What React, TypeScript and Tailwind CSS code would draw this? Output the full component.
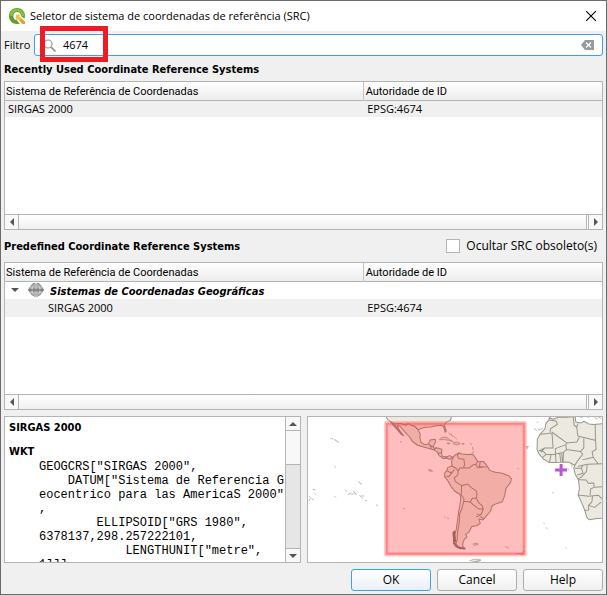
import type { ReactNode } from "react";

const UI = "font-['Open_Sans','Noto_Sans',sans-serif]";
const STRONG = "font-['DejaVu_Sans_Condensed','DejaVu_Sans',sans-serif] text-[11px] font-bold";

function QgisLogo() {
  return (
    <svg viewBox="0 0 48 48" className="size-4 shrink-0" aria-hidden="true">
      <path
        fill="#5f9f30"
        fillRule="evenodd"
        d="M24 0C10 0 0 10 0 24s10 24 24 24c3 0 6-.4 8-1l-8-10C17 37 13 31 13 24s5-12 11-12 12 5 12 12l10 8c1-2 2-5 2-8C48 10 38 0 24 0Z"
      />
      <path fill="#8cbf45" d="M24 2C12 2 2 11 2 23h9c0-8 6-13 13-13s13 6 13 13l9 2C46 12 36 2 24 2Z" />
      <path fill="#ee9a2a" d="M22 20h11l-3 4 18 17v7h-8L27 33l-5 3Z" />
      <path fill="#f3c34a" d="M22 20h11l-3 4 7 7-6 6-4-4-5 3Z" />
    </svg>
  );
}

function Arrow({ dir }: { dir: "left" | "right" | "up" | "down" }) {
  const d = {
    left: "M6 0v8L2 4Z",
    right: "M2 0v8l4-4Z",
    up: "M0 6h8L4 2Z",
    down: "M0 2h8L4 6Z",
  }[dir];
  return (
    <svg viewBox="0 0 8 8" className="size-2" aria-hidden="true">
      <path d={d} fill="#555" />
    </svg>
  );
}

function HorizontalBar() {
  return (
    <div className="flex h-[15px] shrink-0 border-t border-[#b4b4b4]">
      <button aria-label="Rolar para a esquerda" className="flex w-3.5 items-center justify-center border-r border-[#b4b4b4] bg-[#f8f8f8]">
        <Arrow dir="left" />
      </button>
      <div className="flex-1 border-r border-[#b4b4b4] bg-linear-to-b from-white to-[#f0f0f0]" />
      <button aria-label="Rolar para a direita" className="ml-px flex w-3.5 items-center justify-center border-l border-[#b4b4b4] bg-[#f8f8f8]">
        <Arrow dir="right" />
      </button>
    </div>
  );
}

function CrsTable({ children }: { children: ReactNode }) {
  return (
    <div className="flex min-h-0 flex-1 flex-col border border-[#b4b4b4] bg-white">
      <div className="min-h-0 flex-1 overflow-hidden">
        <table className="w-full table-fixed border-collapse text-left text-[11px] leading-4">
          <thead className="font-[Roboto,sans-serif]">
            <tr className="h-[18px] border-b border-[#b4b4b4] bg-linear-to-b from-white to-[#ededed]">
              <th className="w-3/5 border-r border-[#c4c4c4] px-px pt-0.5 font-normal">Sistema de Referência de Coordenadas</th>
              <th className="px-0.5 pt-0.5 font-normal">Autoridade de ID</th>
            </tr>
          </thead>
          <tbody>{children}</tbody>
        </table>
      </div>
      <HorizontalBar />
    </div>
  );
}

function Globe() {
  return (
    <svg viewBox="0 0 16 16" className="size-4 shrink-0" fill="none" aria-hidden="true">
      <path d="M5 1.500h6l3 3.500 1.500 3-3 4.500L8 15l-4.500-2.500L.5 8 2 5Z" fill="#9a9a9a" stroke="#808080" strokeWidth=".8" />
      <path d="M2 5h12M2.500 11h11M8 1v14M8 1 4.500 5v6L8 15M8 1l3.500 4v6L8 15M2 5l2.500 3L2.500 11M14 5l-2.500 3 2 3" stroke="#e4e4e4" strokeWidth=".6" />
      <path d="M.5 8h15" stroke="#666" strokeWidth="1" />
    </svg>
  );
}

const LAND = [
  // Mexico and Central America
  "M272 98 282 104 302 103 316 108 325 103 334 109 344 112 354 122 360 134 359 146 362 158 372 166 385 164 390 152 405 150 406 158 401 167 399 176 412 176 425 180 424 192 426 201 438 203 448 199 458 204 449 210 440 206 429 208 416 198 411 188 402 182 384 177 373 174 352 168 336 156 329 144 313 127 300 111 291 109 297 122 309 138 304 136 290 119 281 110Z",
  // South America
  "M458 205 466 196 476 191 485 194 500 196 517 195 525 205 532 216 550 217 562 232 569 244 585 249 606 252 626 260 633 268 631 279 617 297 613 319 606 337 583 345 575 350 571 365 557 381 548 392 536 389 540 402 529 409 514 411 510 421 505 429 496 435 500 443 492 450 488 461 487 470 494 477 480 478 466 471 459 461 462 440 468 420 472 391 476 362 481 335 481 317 463 305 452 291 440 270 433 262 434 250 440 244 442 235 455 230 454 216Z",
  // Africa
  "M747 85 758 90 774 84 799 84 824 82 826 98 842 101 850 96 865 104 880 106 910 103 910 386 890 387 866 391 859 384 853 363 843 339 833 317 837 298 834 272 824 254 820 236 823 228 805 219 789 218 769 220 747 220 729 209 715 193 710 180 711 149 719 135 734 118 736 104 745 92Z",
];

const USA = "M257 81 262 91 272 98 282 104 302 103 316 108 325 103 334 109 344 112 354 122 361 118 375 114 392 113 404 110 422 108 430 112 435 129 438 126 432 106 440 98 451 93 454 81Z";

const BORDERS = [
  "M385 164 390 170 397 172 M392 168 392 178 M402 181 408 176 M414 192 424 190 M438 203 440 207",
  "M476 191 471 197 475 208 491 210 493 226 490 235 478 236 M455 230 467 237 474 246 M440 244 453 251 462 242 M439 261 446 262 457 248 M478 236 474 246 472 258 462 265 465 276 475 283 484 289 M484 289 502 284 513 295 527 304 530 315 528 327 M484 289 483 317 491 328 490 338 485 358 478 373 477 400 472 428 471 449 466 466 M491 336 510 338 516 327 528 327 M528 327 536 341 545 348 549 359 543 374 529 382 M510 338 524 350 536 359 549 359 M531 374 550 388 M490 235 507 236 516 228 527 225 532 216 M540 217 537 232 548 232 558 234 M527 225 532 235 548 233",
  "M745 133 719 135 M747 92 767 95 771 105 750 119 749 133 M749 133 755 134 758 176 M755 129 799 161 M758 176 733 176 M733 176 723 188 M733 176 717 184 M717 184 731 188 M731 188 737 196 726 204 M737 196 752 196 747 220 M752 196 765 195 767 219 M765 195 765 178 796 166 799 161 M778 194 781 217 M784 194 786 217 M765 194 789 190 798 181 M789 190 788 218 M799 161 829 158 836 145 M818 82 821 108 829 114 832 104 M829 114 832 140 884 153 M850 148 850 176 840 187 798 181 796 166 M884 106 885 153 887 180 M887 180 875 188 878 204 894 225 M840 187 847 195 834 211 823 228 M847 211 857 209 878 204 M834 231 860 225 906 223 M825 237 843 237 847 228 M843 237 848 252 831 257 M860 228 858 246 842 264 834 268 M834 271 857 272 863 282 880 281 881 294 870 299 869 316 M833 317 865 321 894 318 M876 321 874 338 864 348 865 362 853 363 M894 318 906 330 M881 294 906 292 M865 348 882 354 901 339",
];

const ISLES = [
  "M418 151 426 144 439 144 448 151 458 157 445 153 430 151Z",
  "M461 160 470 158 480 163 472 167 460 164Z",
  "M442 161 449 162 444 164ZM486 164 491 164ZM446 131 451 137M461 141 469 149M453 134 457 142",
  "M509 162 514 166M517 174 518 181M519 186 518 192M386 241 394 242 397 246 388 245Z",
  "M519 464 526 461 534 464 524 468ZM616 472 624 476M300 158 303 157M654 492 667 496 670 485M310 357 313 358M433 383 435 384M442 386 445 387",
  "M92 148 98 149M103 151 108 154M108 154 116 159M104 231 107 234M176 276 180 281M180 283 184 284M136 302 141 307M144 315 153 311M155 315 163 313M160 305 169 316M179 319 187 325M186 319 190 320M104 321 107 324M28 322 31 324M27 334 31 328M39 300 45 302M44 312 47 315M36 329 40 331M229 347 232 348M196 333 200 334",
  "M676 173 684 171 680 179M702 118 708 123M713 122 726 118M710 100 713 97M730 401 732 403M739 415 740 418M757 309 758 311M795 474 797 476M652 237 654 239M814 227 815 233M802 237 804 240",
  "M508 514 519 510 532 509 542 512 531 515 523 519M514 518 537 515M883 85 891 89M894 84 902 87M861 83 864 86M840 84 845 86",
];

function ExtentMap() {
  return (
    <svg viewBox="24 81 882 438" preserveAspectRatio="xMidYMid slice" className="block size-full" role="img" aria-label="Extensão do SRC">
      <g fill="#eceae0" stroke="#98958c" strokeWidth="3" strokeLinejoin="round" strokeLinecap="round">
        {[USA, ...LAND].map((d) => (
          <path key={d} d={d} />
        ))}
        <g fill="none">
          {BORDERS.map((d) => (
            <path key={d} d={d} />
          ))}
        </g>
        {ISLES.map((d) => (
          <path key={d} d={d} strokeWidth="2" />
        ))}
        <path d="M459 430 462 460 473 473 493 478M462 426 465 455" fill="none" strokeWidth="5" stroke="#857d72" />
        <path d="M272 99 286 114 297 127 311 140M282 105 302 130" fill="none" />
      </g>
      <rect x="258" y="102" width="415" height="393" fill="#ff0000" fillOpacity=".26" />
      <rect x="258" y="102" width="415" height="393" fill="none" stroke="#ff5050" strokeOpacity=".3" strokeWidth="13" strokeLinejoin="round" />
      <rect x="259" y="103" width="413" height="391" fill="none" stroke="#ff5050" strokeOpacity=".4" strokeWidth="6" />
      <path d="M764 242h36M782 224v36" stroke="#b955cf" strokeWidth="9" />
    </svg>
  );
}

const WKT = `GEOGCRS["SIRGAS 2000",
    DATUM["Sistema de Referencia Geocentrico para las AmericaS 2000",
        ELLIPSOID["GRS 1980",
6378137,298.257222101,
            LENGTHUNIT["metre",
1]]],`;

function DialogButton({ children, primary = false }: { children: ReactNode; primary?: boolean }) {
  return (
    <button
      className={`h-[22px] w-20 rounded-[3px] border bg-linear-to-b from-white text-[12px] leading-4 ${
        primary ? "border-[#3ba0ee] to-[#eaf0f8]" : "border-[#adadad] to-[#f0f0f0]"
      }`}
    >
      {children}
    </button>
  );
}

export default function App() {
  return (
    <div className={`flex h-screen flex-col overflow-hidden border border-[#6b6b6b] bg-[#f0f0f0] text-black ${UI}`}>
      <header className="flex h-[30px] shrink-0 items-center gap-[5px] bg-white px-2 pr-2.5">
        <QgisLogo />
        <h1 className="flex-1 text-[11px] leading-4">Seletor de sistema de coordenadas de referência (SRC)</h1>
        <button aria-label="Fechar">
          <svg viewBox="0 0 10 10" className="size-2.5" aria-hidden="true">
            <path d="m0 0 10 10M10 0 0 10" stroke="#000" strokeWidth="1.100" />
          </svg>
        </button>
      </header>

      <main className="flex min-h-0 flex-1 flex-col p-[3px]">
        <div className="relative flex h-[22px] shrink-0 items-center">
          <label htmlFor="filtro" className="w-[30px] text-[11px]">
            Filtro
          </label>
          <div className="flex h-full flex-1 items-center rounded-[3px] border border-[#3ba0ee] bg-white px-2">
            <svg viewBox="0 0 13 13" className="size-[13px]" fill="none" stroke="#999" aria-hidden="true">
              <circle cx="5" cy="5" r="4" strokeWidth="1.200" />
              <path d="m8 8 4.500 4.500" strokeWidth="1.800" />
            </svg>
            <input id="filtro" defaultValue="4674" className="min-w-0 flex-1 bg-transparent px-[7px] text-[11px] outline-none" />
            <button aria-label="Limpar">
              <svg viewBox="0 0 13 10" className="h-2.5 w-[13px]" aria-hidden="true">
                <path d="M4 0h9v10H4L0 5Z" fill="#999" />
                <path d="m5 2.500 5 5m0-5-5 5" stroke="#fff" strokeWidth="1.200" />
              </svg>
            </button>
          </div>
          <div className="pointer-events-none absolute -top-2 left-9 h-9 w-[68px] border-5 border-[#ed1c24]" />
        </div>

        <h2 className={`flex h-[25px] shrink-0 items-center pt-1 ${STRONG}`}>Recently Used Coordinate Reference Systems</h2>
        <CrsTable>
          <tr className="h-4 bg-[#f0f0f0]">
            <td className="px-[3px]">SIRGAS 2000</td>
            <td className="px-1">EPSG:4674</td>
          </tr>
        </CrsTable>

        <div className="flex h-8 shrink-0 items-center justify-between pr-1.5">
          <h2 className={`pt-1 ${STRONG}`}>Predefined Coordinate Reference Systems</h2>
          <label className="flex items-center gap-1.5 text-[12px]">
            <input type="checkbox" className="size-3.5 appearance-none border border-[#b4b4b4] bg-white" />
            Ocultar SRC obsoleto(s)
          </label>
        </div>
        <CrsTable>
          <tr className="h-[18px]">
            <td colSpan={2} className="px-1.5">
              <div className="flex items-center gap-[9px]">
                <Arrow dir="down" />
                <div className="flex items-center gap-1.5">
                  <Globe />
                  <span className={`pt-1 leading-3 italic ${STRONG}`}>Sistemas de Coordenadas Geográficas</span>
                </div>
              </div>
            </td>
          </tr>
          <tr className="h-[18px] bg-[#f0f0f0]">
            <td className="pl-[43px]">SIRGAS 2000</td>
            <td className="px-1">EPSG:4674</td>
          </tr>
        </CrsTable>

        <div className="mt-1.5 flex min-h-0 flex-1 gap-1.5">
          <section className="flex min-w-0 flex-1 border border-[#b4b4b4] bg-white">
            <div className="min-w-0 flex-1 overflow-hidden pl-1">
              <h3 className={`mt-[3px] leading-4 ${STRONG}`}>SIRGAS 2000</h3>
              <h3 className={`mt-2 leading-4 ${STRONG}`}>WKT</h3>
              <pre className="pl-[30px] font-['Liberation_Mono',monospace] text-[12px] leading-[14px] break-all whitespace-pre-wrap [line-break:anywhere]">{WKT}</pre>
            </div>
            <div className="flex w-[15px] shrink-0 flex-col border-l border-[#b4b4b4] bg-[#e6e6e6]">
              <button aria-label="Rolar para cima" className="flex h-3.5 items-center justify-center border-b border-[#b4b4b4] bg-[#f8f8f8]">
                <Arrow dir="up" />
              </button>
              <div className="h-[34px] border-b border-[#b4b4b4] bg-[#f8f8f8]" />
              <div className="flex-1" />
              <button aria-label="Rolar para baixo" className="flex h-3.5 items-center justify-center border-t border-[#b4b4b4] bg-[#f8f8f8]">
                <Arrow dir="down" />
              </button>
            </div>
          </section>
          <section className="min-w-0 flex-1 border border-[#b4b4b4] bg-white">
            <ExtentMap />
          </section>
        </div>

        <footer className="mt-1.5 flex shrink-0 justify-end gap-1.5">
          <DialogButton primary>OK</DialogButton>
          <DialogButton>Cancel</DialogButton>
          <DialogButton>Help</DialogButton>
        </footer>
      </main>
    </div>
  );
}
